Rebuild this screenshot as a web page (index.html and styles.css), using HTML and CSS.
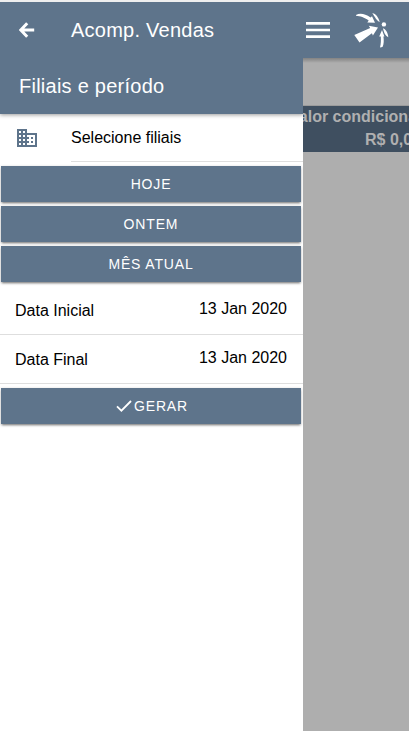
FILE: index.html
```html
<!DOCTYPE html>
<html lang="pt-BR">
<head>
<meta charset="utf-8">
<title>Acomp. Vendas</title>
<link rel="stylesheet" href="styles.css">
</head>
<body>
<header class="topbar">
  <svg class="back" viewBox="0 0 16 16"><path d="M8.200 1.200 1.800 8 8.200 14.800M2.400 8H15.200"/></svg>
  <h1 class="title">Acomp. Vendas</h1>
  <svg class="burger" viewBox="0 0 24 16"><path d="M0 0h24v2.700H0zM0 6.700h24v2.600H0zM0 13.300h24V16H0z"/></svg>
  <svg class="logo" viewBox="0 0 50 50"><path d="M11 9.900C14.500 8 20 8.300 25.500 12.600L27 11.300 30 17.800 22.300 17.400 23.700 15.500C19 12 15.500 11.200 11 10.700ZM9.300 29.900 25.200 23 23.800 20.800 33 22.500 27.900 30.500 26.900 28.200 14.500 37.500ZM27.300 8C31 8.800 33.500 12.500 34.700 17C32 16 29.800 12 27.300 8ZM38 23.300C41 24.500 43 28 43.300 32.200C40.300 31 38.700 27 38 23.300ZM37 25 39.400 31.500 38.400 31.400C39 35 39 39 37.500 42L35 42.600C36 39 36 35 35.800 31.500L34.200 31.500Z"/><circle cx="38.900" cy="19.400" r="2.200"/></svg>
</header>
<main class="layout">
  <aside class="menu">
    <h2 class="menu-title">Filiais e período</h2>
    <div class="branches">
      <svg class="building" viewBox="0 0 24 24"><path d="M12 7V3H2v18h20V7H12zM6 19H4v-2h2v2zm0-4H4v-2h2v2zm0-4H4V9h2v2zm0-4H4V5h2v2zm4 12H8v-2h2v2zm0-4H8v-2h2v2zm0-4H8V9h2v2zm0-4H8V5h2v2zm10 12h-8v-2h2v-2h-2v-2h2v-2h-2V9h8v10zm-2-8h-2v2h2v-2zm0 4h-2v2h2v-2z"/></svg>
      <span class="branches-label">Selecione filiais</span>
    </div>
    <button class="btn">HOJE</button>
    <button class="btn">ONTEM</button>
    <button class="btn">MÊS ATUAL</button>
    <div class="dates">
      <div class="date-row"><span>Data Inicial</span><span class="date">13 Jan 2020</span></div>
      <div class="date-row"><span>Data Final</span><span class="date">13 Jan 2020</span></div>
    </div>
    <button class="btn btn-run"><svg class="check" viewBox="0 0 16 12"><path d="M1 6.300 5.400 10.700 15 1"/></svg>GERAR</button>
  </aside>
  <section class="content">
    <div class="summary">
      <div class="summary-name">Valor condicional</div>
      <div class="summary-value">R$ 0,00</div>
    </div>
  </section>
</main>
</body>
</html>
```
FILE: styles.css
```css
* { box-sizing: border-box; }
body {
  margin: 0;
  height: 731px;
  padding-top: 2px;
  overflow: hidden;
  background: #efefef;
  font: 16px/20px "Liberation Sans", Arial, sans-serif;
  color: #000;
}
.topbar {
  display: flex;
  align-items: center;
  height: 56px;
  padding-left: 19px;
  background: #5e748b;
  color: #fff;
}
.title, .menu-title {
  margin: 0;
  font-size: 20px;
  font-weight: 400;
  letter-spacing: .25px;
  color: #fff;
}
.back { width: 16px; height: 16px; fill: none; stroke: #fff; stroke-width: 3; }
.title { width: 235px; margin-left: 36px; }
.burger { width: 24px; height: 16px; fill: #fff; }
.logo { width: 50px; height: 50px; margin-left: 15px; fill: #fff; }
.layout { display: flex; height: 673px; }
.menu { width: 303px; background: #fff; }
.menu-title {
  height: 56px;
  padding-left: 19px;
  line-height: 56px;
  background: #5e748b;
  box-shadow: 0 1px 4px rgba(0, 0, 0, .4);
  clip-path: inset(0 0 -8px 0);
}
.branches { display: flex; height: 48px; margin-bottom: 4px; padding-left: 15px; align-items: center; }
.building { width: 24px; height: 24px; fill: #5e748b; }
.branches-label {
  flex: 1;
  height: 48px;
  margin-left: 32px;
  line-height: 47px;
  border-bottom: 1px solid #dedede;
}
.btn {
  display: flex;
  align-items: center;
  justify-content: center;
  width: 300px;
  height: 36px;
  margin: 0 0 4px 1px;
  padding: 0;
  border: 0;
  background: #5e748b;
  box-shadow: 0 2px 2px -1px rgba(0, 0, 0, .4), 0 1px 3px rgba(0, 0, 0, .25);
  color: #fff;
  font: 14px "Liberation Sans", Arial, sans-serif;
  letter-spacing: .84px;
}
.btn-run { padding-left: 2px; }
.check { width: 16px; height: 12px; margin-right: 2px; fill: none; stroke: #fff; stroke-width: 1.8; }
.dates { margin-bottom: 4px; }
.date-row {
  display: flex;
  justify-content: space-between;
  height: 49px;
  padding: 15px 16px 0 15px;
  border-bottom: 1px solid #dedede;
}
.date { margin-top: -2px; }
.content {
  flex: 1;
  min-width: 0;
  overflow: hidden;
  background: #aeaeae linear-gradient(rgba(0, 0, 0, .25), transparent) 0 0 / 100% 5px no-repeat;
  padding-top: 47px;
}
.summary {
  height: 47px;
  border-top: 1px solid #9b9b9b;
  background: #3f4f60;
  color: #b0b0b0;
  font-weight: 700;
  line-height: 23px;
  white-space: nowrap;
}
.summary-name { margin: -1px 0 0 -14px; }
.summary-value { margin-left: 62px; }
```
